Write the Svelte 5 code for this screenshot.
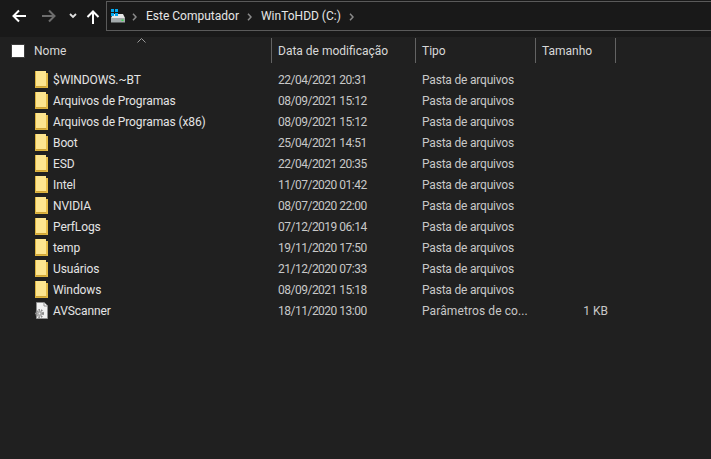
<script>
  const files = [
    ["$WINDOWS.~BT", "22/04/2021 20:31"],
    ["Arquivos de Programas", "08/09/2021 15:12"],
    ["Arquivos de Programas (x86)", "08/09/2021 15:12"],
    ["Boot", "25/04/2021 14:51"],
    ["ESD", "22/04/2021 20:35"],
    ["Intel", "11/07/2020 01:42"],
    ["NVIDIA", "08/07/2020 22:00"],
    ["PerfLogs", "07/12/2019 06:14"],
    ["temp", "19/11/2020 17:50"],
    ["Usuários", "21/12/2020 07:33"],
    ["Windows", "08/09/2021 15:18"],
  ];
</script>

<div class="window">
  <div class="toolbar">
    <div class="nav">
      <svg class="back" width="14" height="14" viewBox="0 0 14 14"><path d="M7 1.500 1.500 7 7 12.500M2 7h12" fill="none" stroke="#fff" stroke-width="2"/></svg>
      <svg class="forward" width="14" height="14" viewBox="0 0 14 14"><path d="M7 1.500 12.500 7 7 12.500M12 7H0" fill="none" stroke="#6d6d6d" stroke-width="2"/></svg>
      <svg class="recent" width="8" height="6" viewBox="0 0 8 6"><path d="M1 1l3 3 3-3" fill="none" stroke="#e0e0e0" stroke-width="1.800"/></svg>
      <svg class="up" width="14" height="14" viewBox="0 0 14 14"><path d="M1.500 7 7 1.500 12.500 7M7 2v12" fill="none" stroke="#fff" stroke-width="2"/></svg>
    </div>
    <div class="address">
      <svg class="drive" width="16" height="15" viewBox="0 0 16 15">
        <path d="M3 5h10l2 4H1z" fill="#e6e6e6"/>
        <rect x="1" y="9" width="14" height="4" fill="#a4aaac"/>
        <rect x="1" y="13" width="14" height="1" fill="#5c6060"/>
        <rect x="11.500" y="10.500" width="2" height="1.500" fill="#35e04a"/>
        <rect x="1" y="0" width="3" height="3" fill="#00a8f0"/>
        <rect x="5" y="0" width="3" height="3" fill="#00a8f0"/>
        <rect x="1" y="4" width="3" height="3" fill="#00a8f0"/>
        <rect x="5" y="4" width="3" height="3" fill="#00a8f0"/>
      </svg>
      <svg class="chev" width="5" height="8" viewBox="0 0 5 8"><path d="M1 .8 4 4 1 7.200" fill="none" stroke="#8a8a8a" stroke-width="1.500"/></svg>
      <span class="crumb">Este Computador</span>
      <svg class="chev" width="5" height="8" viewBox="0 0 5 8"><path d="M1 .8 4 4 1 7.200" fill="none" stroke="#8a8a8a" stroke-width="1.500"/></svg>
      <span class="crumb">WinToHDD (C:)</span>
      <svg class="chev" width="5" height="8" viewBox="0 0 5 8"><path d="M1 .8 4 4 1 7.200" fill="none" stroke="#8a8a8a" stroke-width="1.500"/></svg>
    </div>
  </div>

  <div class="header">
    <span class="sort">
      <svg width="9" height="5" viewBox="0 0 9 5"><path d="M.5 4.500l4-4 4 4" fill="none" stroke="#9a9a9a"/></svg>
    </span>
    <div class="check-cell"><span class="check"></span></div>
    <div class="col name">Nome</div>
    <div class="col date">Data de modificação</div>
    <div class="col type">Tipo</div>
    <div class="col size">Tamanho</div>
  </div>

  <div class="list">
    {#each files as file}
      <div class="row">
        <svg class="icon" width="14" height="17" viewBox="0 0 14 17">
          <path d="M0 0h9v2h4v15H0z" fill="#dcb33f"/>
          <path d="M1 0h10v15H1z" fill="#fde58f"/>
          <path d="M11 2h2v15h-1v-1.500l-1-.500z" fill="#e6bd4a"/>
          <path d="M1 15h10v1H1z" fill="#cfa436"/>
        </svg>
        <span class="cell name">{file[0]}</span>
        <span class="cell date">{file[1]}</span>
        <span class="cell type">Pasta de arquivos</span>
      </div>
    {/each}
    <div class="row">
      <svg class="icon" width="14" height="17" viewBox="0 0 14 17">
        <path d="M1.500 .500h7.500l3.500 3.500v12.500h-11z" fill="#f2f2f2" stroke="#8f8f8f"/>
        <path d="M9 .500V4h3.500" fill="#fff" stroke="#8f8f8f"/>
        <circle cx="4.500" cy="11.500" r="3.500" fill="none" stroke="#8a8a8a" stroke-width="2" stroke-dasharray="1.500 1"/>
        <circle cx="4.500" cy="11.500" r="2.500" fill="#a2a2a2"/>
        <circle cx="4.500" cy="11.500" r="1" fill="#ececec"/>
      </svg>
      <span class="cell name">AVScanner</span>
      <span class="cell date">18/11/2020 13:00</span>
      <span class="cell type long">Parâmetros de co...</span>
      <span class="cell size">1 KB</span>
    </div>
  </div>
</div>

<style>
  :global(body) {
    margin: 0;
    background: #202020;
  }

  .window {
    width: 711px;
    height: 459px;
    overflow: hidden;
    background: #202020;
    color: #e4e4e4;
    font-family: Roboto, "Noto Sans", sans-serif;
    font-size: 12px;
  }

  .toolbar {
    display: flex;
    height: 37px;
    padding-top: 1px;
    box-sizing: border-box;
    background: #191919;
  }

  .nav {
    position: relative;
    width: 106px;
    height: 30px;
    flex: none;
  }

  .nav svg {
    position: absolute;
  }

  .back { left: 12px; top: 8px; }
  .forward { left: 42px; top: 8px; }
  .recent { left: 69px; top: 12px; }
  .up { left: 86px; top: 9px; }

  .address {
    display: flex;
    align-items: center;
    flex: 1;
    height: 30px;
    margin-right: -4px;
    box-sizing: border-box;
    border: 1px solid #5a5a5a;
    padding-left: 3px;
  }

  .drive {
    margin-top: 1px;
    margin-right: 6px;
    flex: none;
  }

  .chev {
    flex: none;
    margin-top: 2px;
    margin-right: 9px;
  }

  .crumb {
    color: #e6e6e6;
    margin-right: 8px;
  }

  .header {
    position: relative;
    display: flex;
    height: 25px;
    margin-top: 1px;
    align-items: stretch;
  }

  .sort {
    position: absolute;
    left: 137px;
    top: 0;
    line-height: 5px;
  }

  .sort svg {
    display: block;
  }

  .check-cell {
    width: 34px;
    flex: none;
    display: flex;
    align-items: center;
  }

  .check {
    width: 12px;
    height: 12px;
    margin-left: 12px;
    background: #fff;
    box-shadow: 0 0 0 1px #3c3c3c;
  }

  .col {
    box-sizing: border-box;
    padding-top: 1px;
    line-height: 24px;
    border-right: 1px solid #636363;
    color: #d8d8d8;
    white-space: nowrap;
  }

  .col.name { width: 238px; }
  .col.date { width: 144px; padding-left: 6px; }
  .col.type { width: 120px; padding-left: 6px; }
  .col.size { width: 80px; padding-left: 6px; }

  .list {
    padding-top: 6px;
  }

  .row {
    display: flex;
    align-items: center;
    height: 21px;
    position: relative;
  }

  .icon {
    flex: none;
    margin-left: 35px;
    margin-right: 4px;
  }

  .cell {
    white-space: nowrap;
    color: #e4e4e4;
  }

  .cell.name { width: 225px; letter-spacing: -0.1px; }
  .cell.date { width: 144px; color: #c8c8c8; letter-spacing: -0.5px; }
  .cell.type { width: 120px; color: #c8c8c8; letter-spacing: -0.2px; }
  .cell.type.long { letter-spacing: 0.1px; }
  .cell.size { width: 66px; text-align: right; color: #c8c8c8; }
</style>
